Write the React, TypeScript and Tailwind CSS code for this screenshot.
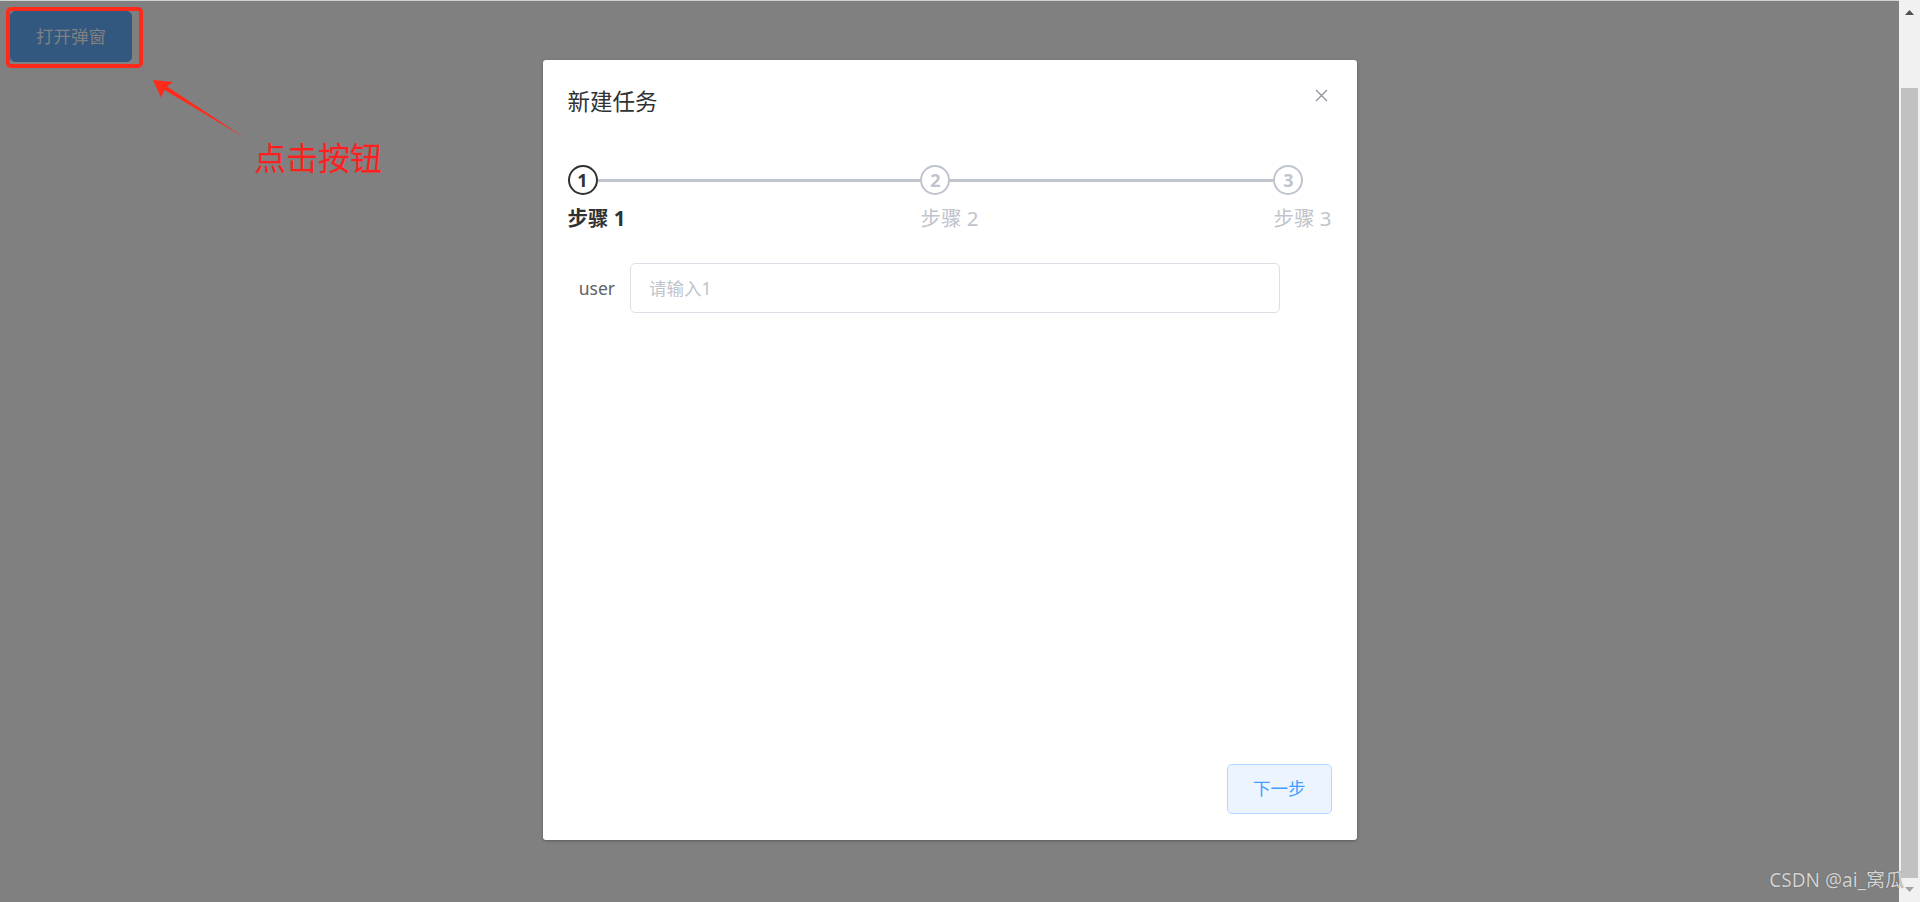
import React from 'react';

const steps = [
    { n: 1, label: '步骤 1', active: true },
    { n: 2, label: '步骤 2', active: false },
    { n: 3, label: '步骤 3', active: false },
];

export default function App() {
    return (
        <div className="relative flex h-[902px] w-full overflow-hidden bg-[#808080] font-['Noto_Sans','Noto_Sans_CJK_SC',sans-serif]">

            {/* Page behind the mask */}
            <div className="relative flex-1 flex flex-col">
                <div className="h-px w-full bg-[#d2d2d2]"></div>
                <div className="pl-[10px] pt-[10px]">
                    <button className="h-[51px] px-[25px] rounded-[5px] bg-[#335880] border border-[#335880] text-[#808080] text-[17.5px] leading-none">
                        打开弹窗
                    </button>
                </div>

                {/* Annotation: red box, arrow, caption */}
                <div className="absolute left-[6px] top-[7px] w-[137px] h-[61px] rounded-[5px] border-4 border-[#ff2a1a]"></div>
                <svg className="absolute left-0 top-0" width="260" height="150" viewBox="0 0 260 150">
                    <polygon points="153,80 173,82 167,86.5 245,138 164.5,90 161,97.5" fill="#ff2a1a" />
                </svg>
                <span className="absolute left-[254px] top-[140px] text-[32px] leading-[32px] text-[#ff1f1f] font-['Noto_Sans_CJK_SC',sans-serif]">
                    点击按钮
                </span>

                {/* Dialog layer */}
                <div className="absolute inset-0 flex justify-center pt-[60px]">
                    <div className="w-[814px] h-[780px] bg-white rounded-[3px] shadow-[0_1px_3px_rgba(0,0,0,0.3)] flex flex-col">
                        {/* Header */}
                        <div className="flex justify-between items-start px-[25px] pt-[25px] pb-[12px]">
                            <h2 className="text-[22.5px] leading-[30px] text-[#303133] font-['Noto_Sans_CJK_SC',sans-serif]">新建任务</h2>
                            <button className="mt-[4px] mr-[4px] w-[13px] h-[13px] flex items-center justify-center">
                                <svg width="13" height="13" viewBox="0 0 13 13">
                                    <path d="M1 1 L12 12 M12 1 L1 12" stroke="#909399" strokeWidth="1.3" fill="none" />
                                </svg>
                            </button>
                        </div>

                        {/* Body */}
                        <div className="h-[625px] px-[25px] pt-[38px]">
                            <div className="flex">
                                {steps.map((s, i) => {
                                    const last = i === steps.length - 1;
                                    const color = s.active ? 'text-[#303133] border-[#303133]' : 'text-[#c0c4cc] border-[#c0c4cc]';
                                    return (
                                        <div key={s.n} className={last ? 'shrink-0' : 'flex-1 basis-0 min-w-0'}>
                                            <div className="flex items-center h-[30px]">
                                                <div className={`w-[30px] h-[30px] shrink-0 rounded-full border-2 bg-white flex items-center justify-center text-[18px] font-bold leading-none ${color}`}>
                                                    {s.n}
                                                </div>
                                                {!last && <div className="flex-1 h-[3px] bg-[#c0c4cc]"></div>}
                                            </div>
                                            <div className={`text-[20.5px] leading-[47.5px] ${last ? '' : 'pr-[12px]'} ${s.active ? 'font-bold text-[#303133]' : 'text-[#c0c4cc]'}`}>
                                                {s.label}
                                            </div>
                                        </div>
                                    );
                                })}
                            </div>

                            {/* Form */}
                            <div className="flex items-center mt-[20px]">
                                <label className="w-[62.5px] pr-[15px] text-right text-[17.5px] leading-[50px] text-[#606266]">user</label>
                                <input
                                    className="w-[650px] h-[50px] px-[18px] rounded-[5px] border border-[#dcdfe6] text-[17.5px] text-[#606266] outline-none placeholder:text-[#c0c4cc]"
                                    placeholder="请输入1"
                                />
                            </div>
                        </div>

                        {/* Footer */}
                        <div className="flex justify-end px-[25px] pt-[12px] pb-[25px]">
                            <button className="h-[50px] px-[25px] rounded-[5px] bg-[#ecf5ff] border border-[#b3d8ff] text-[#409eff] text-[17.5px] leading-none">
                                下一步
                            </button>
                        </div>
                    </div>
                </div>
            </div>

            {/* Scrollbar */}
            <div className="w-[21px] shrink-0 flex flex-col bg-[#f1f1f1]">
                <div className="h-[21px] flex items-center justify-center pt-[4px]">
                    <svg width="9" height="5" viewBox="0 0 9 5">
                        <polygon points="4.5,0 9,5 0,5" fill="#505050" />
                    </svg>
                </div>
                <div className="flex-1 flex flex-col px-[2px] pt-[67px] pb-[3px]">
                    <div className="flex-1 bg-[#c1c1c1]"></div>
                </div>
                <div className="h-[21px] flex items-center justify-center pb-[4px]">
                    <svg width="9" height="5" viewBox="0 0 9 5">
                        <polygon points="0,0 9,0 4.5,5" fill="#a3a3a3" />
                    </svg>
                </div>
            </div>

            {/* Watermark */}
            <span className="absolute right-[16px] bottom-[10px] text-[19px] leading-[24px] text-[#d4d4d4] [text-shadow:0_0_1px_#4a4a4a]">
                CSDN @ai_窝瓜
            </span>
        </div>
    );
}
